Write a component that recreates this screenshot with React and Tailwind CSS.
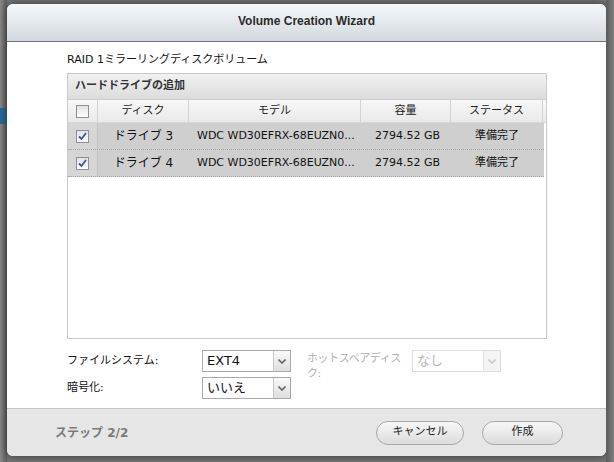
import { useState } from "react";

const FONT = { fontFamily: '"DejaVu Sans", "Noto Sans CJK JP", sans-serif' };
const TITLE_FONT = { fontFamily: '"Liberation Sans", "Noto Sans CJK JP", sans-serif' };

const DRIVES = [
    { id: 3, model: "WDC WD30EFRX-68EUZN0...", size: "2794.52 GB", status: "準備完了" },
    { id: 4, model: "WDC WD30EFRX-68EUZN0...", size: "2794.52 GB", status: "準備完了" },
];

const Check = ({ checked }) => (
    <span className="w-[13px] h-[13px] border border-[#8f8f8f] bg-gradient-to-b from-[#e2e2e2] to-[#ffffff] flex items-center justify-center">
        {checked && (
            <svg width="9" height="9" viewBox="0 0 9 9">
                <path d="M1 4.5 L3.5 7 L8 1" fill="none" stroke="#3a55a8" strokeWidth="1.8" />
            </svg>
        )}
    </span>
);

const Select = ({ value, disabled }) => (
    <div
        className={`w-[89px] h-[22px] border flex items-stretch ${
            disabled ? "border-[#dcdcdc] text-[#b5b5b5]" : "border-[#a9a9a9] text-[#111]"
        }`}
    >
        <div className="flex-1 flex items-center pl-[4px] text-[13px] bg-white">{value}</div>
        <div
            className={`w-[17px] flex items-center justify-center border-l ${
                disabled ? "border-[#e4e4e4] bg-[#f4f4f4]" : "border-[#c9c9c9] bg-gradient-to-b from-[#fafafa] to-[#dedede]"
            }`}
        >
            <svg width="8" height="5" viewBox="0 0 8 5">
                <path d="M0.5 0.5 L4 4 L7.5 0.5" fill="none" stroke={disabled ? "#c8c8c8" : "#666"} strokeWidth="1.6" />
            </svg>
        </div>
    </div>
);

const Button = ({ children, width }) => (
    <button
        className={`${width} h-[24px] rounded-full border border-[#a8a8a8] bg-gradient-to-b from-[#f7f7f7] to-[#dcdcdc] text-[11px] text-[#222] flex items-center justify-center`}
    >
        {children}
    </button>
);

export default function App() {
    const [rows] = useState(DRIVES);

    return (
        <div className="w-[614px] h-[462px] bg-[#747474] overflow-hidden flex" style={FONT}>
            <div className="w-[7px] shrink-0 flex flex-col pt-[108px] bg-gradient-to-r from-[#8a8a8a] to-[#5e5e5e]">
                <div className="h-[16px] bg-[#2a6a96]" />
            </div>
            <div className="mt-[4px] w-[599px] h-[452px] rounded-[6px] overflow-hidden flex flex-col bg-white shadow-[0_0_8px_rgba(0,0,0,0.55)]">
                <div className="h-[38px] shrink-0 bg-gradient-to-b from-[#f6f8fa] to-[#d3d9df] border-b border-[#6f7479] flex items-center justify-center">
                    <span className="text-[12px] font-bold text-[#2b2b2b] -mt-[4px]" style={TITLE_FONT}>
                        Volume Creation Wizard
                    </span>
                </div>

                <div className="flex-1 flex flex-col pl-[60px] pr-[59px] pt-[11px]">
                    <div className="text-[11px] leading-[14px] text-[#111] h-[20px]">RAID 1ミラーリングディスクボリューム</div>

                    <div className="w-[480px] h-[266px] border border-[#c9c9c9] flex flex-col">
                        <div className="h-[26px] bg-gradient-to-b from-[#f1f1f1] to-[#dcdcdc] border-b border-[#cfcfcf] flex items-center pl-[7px]">
                            <span className="text-[11px] font-bold text-[#333]">ハードドライブの追加</span>
                        </div>
                        <div className="h-[23px] flex bg-gradient-to-b from-[#f8f8f8] to-[#e9e9e9] border-b border-[#d6d6d6] text-[11px] text-[#222]">
                            <div className="w-[30px] flex items-center justify-center border-r border-[#d3d3d3]">
                                <Check />
                            </div>
                            <div className="w-[91px] flex items-center justify-center border-r border-[#d3d3d3]">ディスク</div>
                            <div className="w-[172px] flex items-center justify-center border-r border-[#d3d3d3]">モデル</div>
                            <div className="w-[90px] flex items-center justify-center border-r border-[#d3d3d3]">容量</div>
                            <div className="w-[92px] flex items-center justify-center border-r border-[#d3d3d3]">ステータス</div>
                            <div className="flex-1" />
                        </div>
                        {rows.map((d) => (
                            <div
                                key={d.id}
                                className="h-[27px] w-[476px] flex bg-[#cfcfcf] border-b border-dotted border-[#a6a6a6] text-[11px] text-[#111]"
                            >
                                <div className="w-[30px] flex items-center justify-center bg-[#d6d6d6] border-r border-[#c2c2c2]">
                                    <Check checked />
                                </div>
                                <div className="w-[91px] flex items-center justify-center text-[12px]">ドライブ {d.id}</div>
                                <div className="w-[172px] flex items-center pl-[8px] whitespace-nowrap overflow-hidden">{d.model}</div>
                                <div className="w-[90px] flex items-center pl-[14px]">{d.size}</div>
                                <div className="w-[92px] flex items-center justify-center">{d.status}</div>
                            </div>
                        ))}
                        <div className="flex-1 bg-white" />
                    </div>

                    <div className="flex mt-[11px] text-[11px]">
                        <div className="w-[240px] flex flex-col gap-[5px]">
                            <div className="flex items-center">
                                <span className="w-[135px] text-[#111]">ファイルシステム:</span>
                                <Select value="EXT4" />
                            </div>
                            <div className="flex items-center">
                                <span className="w-[135px] text-[#111]">暗号化:</span>
                                <Select value="いいえ" />
                            </div>
                        </div>
                        <div className="flex items-start">
                            <span className="w-[105px] pr-[2px] text-[#b0b0b0] leading-[15px] pt-[1px] tracking-[-0.4px]">
                                ホットスペアディス
                                <br />
                                ク:
                            </span>
                            <Select value="なし" disabled />
                        </div>
                    </div>
                </div>

                <div className="h-[48px] shrink-0 bg-[#e6e6e6] border-t border-[#c4c4c4] flex items-center pl-[48px] pr-[43px]">
                    <span className="text-[12px] font-bold text-[#7a7a7a]">ステップ 2/2</span>
                    <div className="flex-1" />
                    <Button width="w-[88px]">キャンセル</Button>
                    <div className="w-[18px]" />
                    <Button width="w-[81px]">作成</Button>
                </div>
            </div>
            <div className="flex-1 bg-gradient-to-r from-[#5a5a5a] to-[#808080]" />
        </div>
    );
}
